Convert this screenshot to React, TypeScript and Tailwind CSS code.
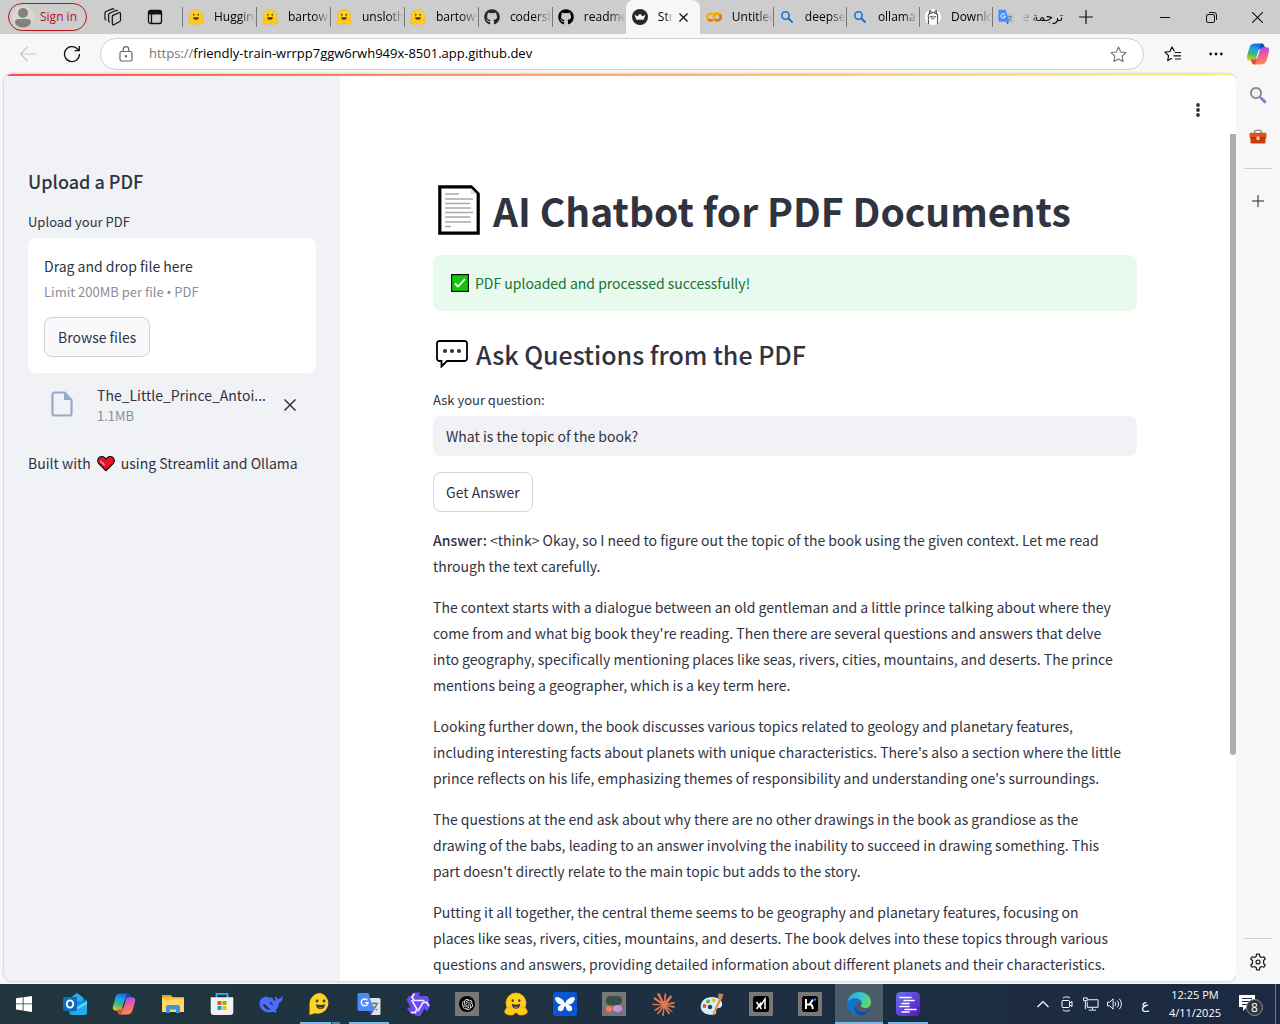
import React, { useId } from "react";
import { FaGithub } from "react-icons/fa";
import { SiOllama, SiOpenai, SiClaude } from "react-icons/si";

function HuggingFace({ className }: { className: string }) {
  return (
    <svg viewBox="0 0 24 24" className={className} aria-hidden="true">
      <circle cx="12" cy="11" r="10" fill="#ffd21e" stroke="#ffac03" strokeWidth="0.8" />
      <ellipse cx="8.7" cy="8.7" rx="1.2" ry="1.4" fill="#3a3b45" />
      <ellipse cx="15.3" cy="8.7" rx="1.2" ry="1.4" fill="#3a3b45" />
      <path d="M7.8 11.8c1.2 1 7.2 1 8.4 0 .3 2.8-1.6 5-4.2 5s-4.5-2.2-4.2-5z" fill="#3a3b45" />
      <path d="M10 15.500c.8-1.200 3.200-1.200 4 0-1 .9-3 .9-4 0z" fill="#ef4e4e" />
      <path d="M2 17c.5-2 2-1.500 2.400-.8.4-2.800 2.100-2.300 2.500-.5.8-.8 2 .2 2.200 1.600 1.700 1.700 2 3.500.6 5.200-2.400 1-6.500.6-8.400-1.200C.4 20 .6 18.200 2 17z" fill="#ffcc16" stroke="#ffac03" strokeWidth="0.8" />
      <path d="M22 17c-.5-2-2-1.500-2.400-.8-.4-2.800-2.100-2.300-2.500-.5-.8-.8-2 .2-2.200 1.600-1.700 1.700-2 3.500-.6 5.200 2.400 1 6.500.6 8.400-1.200.9-1.300.7-3.100-.7-4.300z" fill="#ffcc16" stroke="#ffac03" strokeWidth="0.8" />
    </svg>
  );
}

function Copilot({ className }: { className: string }) {
  const id = useId();
  const ribbon =
    "M9.200 1.500h6.300c1.600 0 2.400 1 2.800 2.500l.7 2.600h-3.600c-1.700 0-2.600.9-3.100 2.500l-2.200 7.200c-.5 1.700-1.500 2.500-3.200 2.500H3.800c-2.400 0-3.500-1.900-2.900-4.200l2.500-8.900c.8-2.800 2.600-4.200 5.800-4.200z";
  return (
    <svg viewBox="0 0 24 24" className={className} aria-hidden="true">
      <defs>
        <linearGradient id={id + "a"} x1="0.600" y1="0" x2="0.300" y2="1">
          <stop offset="0" stopColor="#1468d8" />
          <stop offset="0.350" stopColor="#18a5e8" />
          <stop offset="0.650" stopColor="#3fb878" />
          <stop offset="1" stopColor="#e8cc18" />
        </linearGradient>
        <linearGradient id={id + "b"} x1="0.500" y1="1" x2="0.300" y2="0">
          <stop offset="0" stopColor="#a44df0" />
          <stop offset="0.450" stopColor="#ee5c9c" />
          <stop offset="1" stopColor="#fb9148" />
        </linearGradient>
      </defs>
      <path d={ribbon} fill={`url(#${id}a)`} />
      <path d="M14.800 1.500h.7c1.600 0 2.400 1 2.800 2.500l.7 2.600h-3.600c-1 0-1.800.4-2.300 1z" fill="#1449b0" />
      <g transform="rotate(180 12 12)">
        <path d={ribbon} fill={`url(#${id}b)`} />
        <path d="M14.800 1.500h.7c1.600 0 2.400 1 2.800 2.500l.7 2.600h-3.600c-1 0-1.800.4-2.300 1z" fill="#e34a3b" />
      </g>
    </svg>
  );
}

function Translate({ className, faded }: { className: string; faded?: boolean }) {
  return (
    <svg viewBox="0 0 24 24" className={className} aria-hidden="true">
      <path d="M9 6h13a1.500 1.500 0 0 1 1.500 1.500v14A1.500 1.500 0 0 1 22 23h-8z" fill={faded ? "#bcc8cc" : "#dfe3e8"} />
      <path d="M14 11.500h7M17.500 10v1.500M20 11.500c-.7 3-2.500 5-5 6.500M15.500 13.500c1 2.200 2.500 3.600 4.800 4.700" stroke="#5f7d88" strokeWidth="1.300" fill="none" />
      <path d="M14 23l-2-4 4.500 0z" fill="#3457c8" />
      <path d="M2 1h9.500l5.500 18H2A1.500 1.500 0 0 1 .5 17.500v-15A1.500 1.500 0 0 1 2 1z" fill="#4c8bf5" />
      <path d="M10.300 8.200a3.400 3.400 0 1 0 .8 2.500H7.900" stroke="#fff" strokeWidth="1.400" fill="none" />
    </svg>
  );
}

function Colab() {
  return (
    <svg viewBox="0 0 16 16" className="size-4 shrink-0" fill="none" strokeWidth="2.400" aria-hidden="true">
      <circle cx="11.300" cy="8" r="3.400" stroke="#f9ab00" />
      <path d="M8.900 10.400a3.400 3.400 0 1 0 0-4.800" stroke="#e8710a" />
      <path d="M7 5.500a3.400 3.400 0 1 0 0 5" stroke="#f9ab00" />
      <path d="M2.200 10.400a3.400 3.400 0 0 0 4.800.1" stroke="#e8710a" />
      <path d="M8.900 10.400a3.400 3.400 0 0 1 4.800-4.800" stroke="#f9ab00" />
    </svg>
  );
}

function StreamlitCrown() {
  return (
    <svg viewBox="0 0 16 16" className="size-4 shrink-0" aria-hidden="true">
      <circle cx="8" cy="8" r="8" fill="#262730" />
      <path d="M2.500 5.500l3 2L8 4.500l2.500 3 3-2-1.800 5H4.300z" fill="#fff" />
      <path d="M4.300 9.500h7.400v1H4.300z" fill="#d9dade" />
    </svg>
  );
}

function BlueSearch() {
  return (
    <svg viewBox="0 0 16 16" className="size-4 shrink-0" fill="none" stroke="#1a75cf" strokeLinecap="round" aria-hidden="true">
      <circle cx="6.500" cy="6.500" r="3.700" strokeWidth="1.600" />
      <path d="M9.500 9.500l3.500 3.500" strokeWidth="2" />
    </svg>
  );
}

type Tab = { title: string; icon: React.ReactNode; active?: boolean; rtl?: boolean };

const tabs: Tab[] = [
  { title: "Hugging", icon: <HuggingFace className="size-4 shrink-0" /> },
  { title: "bartowski", icon: <HuggingFace className="size-4 shrink-0" /> },
  { title: "unsloth/", icon: <HuggingFace className="size-4 shrink-0" /> },
  { title: "bartowski", icon: <HuggingFace className="size-4 shrink-0" /> },
  { title: "codersb", icon: <FaGithub className="size-4 shrink-0 text-[#24292e]" /> },
  { title: "readme", icon: <FaGithub className="size-4 shrink-0 text-black" /> },
  { title: "Streamlit", icon: <StreamlitCrown />, active: true },
  { title: "Untitled", icon: <Colab /> },
  { title: "deepseek", icon: <BlueSearch /> },
  { title: "ollama", icon: <BlueSearch /> },
  {
    title: "Download",
    icon: (
      <span className="flex size-4 shrink-0 items-center justify-center rounded-full bg-white">
        <SiOllama className="size-[14px] text-[#222]" />
      </span>
    ),
  },
  { title: "ترجمة Google", icon: <Translate className="size-4 shrink-0" faded />, rtl: true },
];

function tabClass(i: number, active?: boolean) {
  if (active) return "flex min-w-0 flex-[74] items-center rounded-t-lg bg-[#f7f7f7] pl-1.5";
  if (i === 7) return "flex min-w-0 flex-[73] items-center pl-1.5";
  return i < 6
    ? "flex min-w-0 flex-[74] items-center pl-1.5 [background:linear-gradient(#777,#777)_left_center/1px_20px_no-repeat]"
    : "flex min-w-0 flex-[73] items-center pl-1.5 [background:linear-gradient(#777,#777)_left_center/1px_20px_no-repeat]";
}

function TabStrip() {
  return (
    <header className="flex h-[34px] shrink-0 items-stretch bg-[#cdcdcd] text-xs text-black">
      <div className="flex w-[182px] shrink-0 items-center pl-2">
        <button className="flex h-7 w-[79px] items-center gap-1.5 rounded-full border border-[#b5161d] pl-[3px] text-[#b5161d]">
          <svg viewBox="0 0 22 22" className="size-[22px] shrink-0" aria-hidden="true">
            <circle cx="11" cy="11" r="11" fill="#dad8d4" />
            <circle cx="11" cy="7" r="5" fill="#85827e" />
            <path d="M3 16c0-2 1.200-3 3-3h10c1.800 0 3 1 3 3 0 3-4 5.500-8 5.500S3 19 3 16z" fill="#85827e" />
          </svg>
          <span className="whitespace-nowrap">Sign in</span>
        </button>
        <button aria-label="Workspaces" className="ml-[17px]">
          <svg viewBox="0 0 18 18" className="size-[18px]" fill="none" stroke="#111" strokeWidth="1.200" strokeLinejoin="round" strokeLinecap="round">
            <path d="M8.300 8.600c0-.7.4-1.200 1-1.500l5.700-2.300c.8-.3 1.500.1 1.500 1v6.400c0 .6-.3 1-.8 1.300l-5.900 3.200c-.8.4-1.500 0-1.500-.9z" />
            <path d="M5.500 14c-.6-.2-.9-.6-.9-1.200V6.800c0-.8.4-1.300 1-1.600l6.200-2.700c.6-.3 1.200-.1 1.500.4" />
            <path d="M1.900 12c-.6-.2-.9-.6-.9-1.200V5.100c0-.8.4-1.300 1-1.600L8.200.9c.6-.3 1.200-.1 1.500.4" />
          </svg>
        </button>
        <button aria-label="Tab actions" className="ml-[25px]">
          <svg viewBox="0 0 16 16" className="size-4" fill="none" stroke="#111" strokeWidth="1.300">
            <rect x="1.500" y="1.500" width="13" height="13" rx="2" />
            <path d="M1.500 3.500h13" strokeWidth="4" />
            <path d="M4.500 5v9.500" />
          </svg>
        </button>
      </div>
      <nav className="flex min-w-0 max-w-[883px] flex-1">
        {tabs.map((tab, i) => (
          <div key={i} className={tabClass(i, tab.active)}>
            {tab.icon}
            {tab.rtl ? (
              <span dir="rtl" className="ml-2 mr-0.5 flex-1 overflow-hidden whitespace-nowrap [mask-image:linear-gradient(to_left,black_55%,transparent)]">
                {tab.title}
              </span>
            ) : tab.active ? (
              <>
                <span className="ml-2.5 w-[15px] overflow-hidden whitespace-nowrap [mask-image:linear-gradient(to_right,black_50%,transparent)]">
                  {tab.title}
                </span>
                <button aria-label="Close tab" className="ml-1.5">
                  <svg viewBox="0 0 10 10" className="size-[9px]" stroke="#111" strokeWidth="1.400">
                    <path d="M.5.5l9 9M9.500.5l-9 9" />
                  </svg>
                </button>
              </>
            ) : (
              <span className="ml-2.5 flex-1 overflow-hidden whitespace-nowrap [mask-image:linear-gradient(to_right,black_60%,transparent)]">
                {tab.title}
              </span>
            )}
          </div>
        ))}
      </nav>
      <button aria-label="New tab" className="w-[42px] shrink-0 pl-3.5">
        <svg viewBox="0 0 14 14" className="size-[14px]" stroke="#111" strokeWidth="1.200">
          <path d="M7 0v14M0 7h14" />
        </svg>
      </button>
      <div className="ml-auto flex shrink-0">
        <button aria-label="Minimize" className="flex w-[46px] items-center justify-center">
          <svg viewBox="0 0 10 10" className="size-[10px]" stroke="#111"><path d="M0 5.500h10" /></svg>
        </button>
        <button aria-label="Restore" className="flex w-[46px] items-center justify-center">
          <svg viewBox="0 0 11 11" className="size-[11px]" stroke="#111" fill="none">
            <rect x="0.500" y="2.500" width="8" height="8" rx="1.500" />
            <path d="M3 .5h5A2.500 2.500 0 0 1 10.500 3v5" />
          </svg>
        </button>
        <button aria-label="Close" className="flex w-[46px] items-center justify-center">
          <svg viewBox="0 0 10 10" className="size-[11px]" stroke="#111"><path d="M0 0l10 10M10 0L0 10" /></svg>
        </button>
      </div>
    </header>
  );
}

const starPath = "M8 1l2.100 4.600 4.900.6-3.600 3.400.9 5L8 12.200 3.700 14.600l.9-5L1 6.200l4.900-.6z";

function AddressBar() {
  return (
    <div className="flex h-10 shrink-0 items-center bg-[#f7f7f7]">
      <button aria-label="Back" className="ml-[19px]">
        <svg viewBox="0 0 18 16" className="h-4 w-[18px]" fill="none" stroke="#c6c6c6" strokeWidth="1.200">
          <path d="M17 8H1.500M8.500 1L1.500 8l7 7" />
        </svg>
      </button>
      <button aria-label="Refresh" className="ml-[26px]">
        <svg viewBox="0 0 18 18" className="size-[18px]" fill="none" stroke="#111" strokeWidth="1.300">
          <path d="M16.500 9A7.500 7.500 0 1 1 14 3.500l2 2M16.300 1v4.700h-4.700" />
        </svg>
      </button>
      <div className="ml-[19px] flex h-8 min-w-0 flex-1 items-center rounded-full border border-[#cfcfcf] bg-white pl-[18px] pr-4">
        <svg viewBox="0 0 14 16" className="h-4 w-[14px] shrink-0" fill="none" stroke="#666" strokeWidth="1.200" aria-hidden="true">
          <rect x="1" y="5.500" width="12" height="9.500" rx="1.800" />
          <path d="M4.200 5.500V3.500a2.800 2.800 0 0 1 5.600 0v2" />
          <circle cx="7" cy="10.300" r="0.600" fill="#666" />
        </svg>
        <label htmlFor="address" className="ml-4 text-[13px] text-[#767676]">https://</label>
        <input
          id="address"
          defaultValue="friendly-train-wrrpp7ggw6rwh949x-8501.app.github.dev"
          className="min-w-0 flex-1 bg-transparent text-[13px] text-black outline-none"
        />
        <button aria-label="Add to favorites">
          <svg viewBox="0 0 16 16" className="size-[17px]" fill="none" stroke="#707070" strokeLinejoin="round">
            <path d={starPath} />
          </svg>
        </button>
      </div>
      <div className="ml-5 flex shrink-0 items-center">
        <button aria-label="Favorites">
          <svg viewBox="0 0 18 16" className="h-4 w-[18px]" fill="none" stroke="#111" strokeWidth="1.200" strokeLinejoin="round">
            <path d="M10.500 5.500L8 1 5.900 5.500 1 6.200l3.600 3.400-.9 5L8 12.200M11 6.500h6M9.500 9.800h7.500M11 13h6" />
          </svg>
        </button>
        <button aria-label="Settings and more" className="ml-[27px]">
          <svg viewBox="0 0 14 4" className="h-1 w-[14px]" fill="#111">
            <circle cx="1.700" cy="2" r="1.400" /><circle cx="7" cy="2" r="1.400" /><circle cx="12.300" cy="2" r="1.400" />
          </svg>
        </button>
        <button aria-label="Copilot" className="ml-[23px] mr-[10px]">
          <Copilot className="size-6" />
        </button>
      </div>
    </div>
  );
}

function EdgeSidebar() {
  return (
    <aside className="flex w-11 shrink-0 flex-col items-center bg-[#f7f7f7]">
      <button aria-label="Search" className="mt-3">
        <svg viewBox="0 0 18 18" className="size-[18px]" fill="none">
          <circle cx="7" cy="7" r="5.200" stroke="#858585" strokeWidth="1.800" fill="#eeeff1" />
          <path d="M10.800 10.800l2 2" stroke="#858585" strokeWidth="1.800" />
          <path d="M12.800 12.800l3 3" stroke="#a069d6" strokeWidth="3" strokeLinecap="round" />
        </svg>
      </button>
      <button aria-label="Tools" className="mt-6">
        <svg viewBox="0 0 18 18" className="size-[18px]">
          <path d="M5.500 5V4c0-1 .6-1.600 1.600-1.600h3.800c1 0 1.600.6 1.600 1.600v1" stroke="#858b91" strokeWidth="1.400" fill="none" />
          <path d="M1.500 9h15v5.500a1 1 0 0 1-1 1h-13a1 1 0 0 1-1-1z" fill="#c93d0c" />
          <rect x="0.500" y="4.800" width="17" height="5" rx="1" fill="#e4501b" />
          <path d="M1 9.800h16" stroke="#9d2c07" />
          <rect x="7.500" y="8.500" width="3" height="3.400" rx="0.600" fill="#c9d3d8" />
        </svg>
      </button>
      <hr className="mt-[22px] w-7 border-[#cfcfcf]" />
      <button aria-label="Customize" className="mt-[26px]">
        <svg viewBox="0 0 12 12" className="size-3" stroke="#222"><path d="M6 0v12M0 6h12" /></svg>
      </button>
      <hr className="mt-auto w-7 border-[#cfcfcf]" />
      <button aria-label="Settings" className="mb-[13px] mt-3.5">
        <svg viewBox="0 0 24 24" className="size-[18px]" fill="none" stroke="#222" strokeWidth="1.700" strokeLinejoin="round">
          <path d="M9.600 4.500L10.200 1.500h3.600l.6 3 2.600 1.500 2.900-1 1.800 3.100L19.400 10.100v3.800l2.300 2-1.800 3.100-2.900-1-2.600 1.500-.6 3h-3.600l-.6-3L7 18l-2.900 1-1.800-3.100 2.300-2v-3.800l-2.300-2L4.100 5 7 6z" />
          <circle cx="12" cy="12" r="2.600" />
        </svg>
      </button>
    </aside>
  );
}

function UploadSidebar() {
  return (
    <aside className="w-[336px] shrink-0 bg-[#f0f2f6] px-6 pt-[93px]">
      <h2 className="text-[18px] font-medium leading-6">Upload a PDF</h2>
      <label htmlFor="browse" className="mt-[17px] block text-[13px] leading-6">Upload your PDF</label>
      <section className="mt-1 rounded-lg bg-white px-4 pb-4 pt-[15px]">
        <p className="text-sm leading-[26px]">Drag and drop file here</p>
        <p className="mb-[15px] mt-[3px] text-[13px] leading-5 text-[#8b8d96]">
          Limit 200MB per file <span className="font-['Noto_Sans',sans-serif]">•</span> PDF
        </p>
        <button id="browse" className="h-10 rounded-lg border border-[#d0d1d6] bg-[#f9f9fb] px-[13px] text-sm">
          Browse files
        </button>
      </section>
      <div className="flex items-center pl-[23px] pt-[11px]">
        <svg viewBox="0 0 22 26" className="mb-[2px] h-[26px] w-[22px] shrink-0" fill="none" aria-hidden="true">
          <path d="M13.500 1.500H3.500a2 2 0 0 0-2 2v19a2 2 0 0 0 2 2h15a2 2 0 0 0 2-2V9z" stroke="#99a7cd" strokeWidth="2.200" strokeLinejoin="round" />
          <path d="M13 1.500V9h7.500z" fill="#99a7cd" />
        </svg>
        <div className="ml-6 w-[177px] min-w-0">
          <p className="whitespace-nowrap text-sm leading-[22px]">The_Little_Prince_Antoi...</p>
          <p className="text-[13px] leading-5 text-[#8b8d96]">1.1MB</p>
        </div>
        <button aria-label="Remove file" className="ml-[10px]">
          <svg viewBox="0 0 12 12" className="size-3" stroke="#31333f" strokeWidth="1.500"><path d="M.5.5l11 11M11.500.5l-11 11" /></svg>
        </button>
      </div>
      <p className="mt-6 flex items-center text-sm leading-[26px]">
        Built with
        <svg viewBox="0 0 18 17" role="img" aria-label="love" className="mx-1.5 h-[17px] w-[18px]">
          <path d="M9 15.700L1.800 8.600C.3 7 .4 4.200 1.900 2.700c1.600-1.600 4.200-1.600 5.700 0L9 4.100l1.400-1.400c1.500-1.600 4.100-1.600 5.700 0 1.500 1.500 1.600 4.300.1 5.900z" fill="#e81224" stroke="#111" strokeWidth="1.200" />
          <path d="M3.600 6.200l3.600 3.600" stroke="#f6a0a6" strokeLinecap="round" strokeWidth="1.400" />
        </svg>
        using Streamlit and Ollama
      </p>
    </aside>
  );
}

const paragraphs = [
  "The context starts with a dialogue between an old gentleman and a little prince talking about where they come from and what big book they're reading. Then there are several questions and answers that delve into geography, specifically mentioning places like seas, rivers, cities, mountains, and deserts. The prince mentions being a geographer, which is a key term here.",
  "Looking further down, the book discusses various topics related to geology and planetary features, including interesting facts about planets with unique characteristics. There's also a section where the little prince reflects on his life, emphasizing themes of responsibility and understanding one's surroundings.",
  "The questions at the end ask about why there are no other drawings in the book as grandiose as the drawing of the babs, leading to an answer involving the inability to succeed in drawing something. This part doesn't directly relate to the main topic but adds to the story.",
  "Putting it all together, the central theme seems to be geography and planetary features, focusing on places like seas, rivers, cities, mountains, and deserts. The book delves into these topics through various questions and answers, providing detailed information about different planets and their characteristics.",
];

function ChatPage() {
  return (
    <main className="flex min-w-0 flex-1 flex-col bg-white">
      <div className="flex h-[58px] shrink-0 items-center justify-end pr-9 pt-2.5">
        <button aria-label="Main menu">
          <svg viewBox="0 0 4 14" className="h-[14px] w-1" fill="#31333f">
            <circle cx="2" cy="2" r="1.900" /><circle cx="2" cy="7" r="1.900" /><circle cx="2" cy="12" r="1.900" />
          </svg>
        </button>
      </div>
      <div className="flex min-h-0 flex-1">
        <div className="min-w-0 flex-1 overflow-hidden px-4">
          <div className="mx-auto max-w-[704px] pt-[50px]">
            <h1 className="flex items-center whitespace-nowrap text-[39px] font-bold leading-[52px]">
              <svg viewBox="0 0 42 50" className="ml-[5px] mr-[13px] h-[50px] w-[42px] shrink-0" aria-hidden="true">
                <path d="M1.800 1.800h31.400l7 7v39.400H1.800z" fill="#fff" stroke="#000" strokeWidth="3.200" />
                <path d="M33 3v6h6z" fill="#ddd" />
                <path d="M7 9h14M7 14h28M7 18.500h25M7 23h26M7 27.500h28M7 32h25M7 37h26M7 41.500h6" stroke="#aaa" strokeWidth="1.300" />
              </svg>
              AI Chatbot for PDF Documents
            </h1>
            <div role="status" className="mt-[19px] flex h-14 items-center rounded-lg bg-[#e8f9ee] px-[18px] text-sm text-[#177233]">
              <svg viewBox="0 0 18 18" className="mr-1.5 size-[18px]" aria-hidden="true">
                <rect x="0.600" y="0.600" width="16.800" height="16.800" fill="#16c60c" stroke="#111" strokeWidth="1.200" />
                <path d="M4 9.500l3 3L14 5" stroke="#fff" strokeWidth="1.800" fill="none" />
              </svg>
              PDF uploaded and processed successfully!
            </div>
            <h2 className="mt-[25px] flex items-center text-[25px] font-medium leading-9">
              <svg viewBox="0 0 32 28" className="ml-[3px] mr-2 h-7 w-8" aria-hidden="true">
                <path d="M3.500 1h25A2.500 2.500 0 0 1 31 3.500v15a2.500 2.500 0 0 1-2.500 2.500H11l-5.500 5.500V21h-2A2.500 2.500 0 0 1 1 18.500v-15A2.500 2.500 0 0 1 3.500 1z" fill="#fff" stroke="#000" strokeWidth="1.800" />
                <g fill="#333"><circle cx="9" cy="11" r="2" /><circle cx="16" cy="11" r="2" /><circle cx="23" cy="11" r="2" /></g>
              </svg>
              Ask Questions from the PDF
            </h2>
            <label htmlFor="question" className="mt-4 block text-[13px] leading-6">Ask your question:</label>
            <input
              id="question"
              defaultValue="What is the topic of the book?"
              className="mt-1 block h-10 w-full rounded-lg bg-[#f0f2f6] px-[13px] text-sm outline-none"
            />
            <button className="mt-4 block h-10 rounded-lg border border-[#d6d6d9] bg-white px-3 text-sm">Get Answer</button>
            <div className="mt-[15px] flex flex-col gap-[15px] pr-[15px] text-sm leading-[26px]">
              <p>
                <strong className="font-medium">Answer:</strong>
                {" <think> Okay, so I need to figure out the topic of the book using the given context. Let me read through the text carefully."}
              </p>
              {paragraphs.map((text) => (
                <p key={text}>{text}</p>
              ))}
            </div>
          </div>
        </div>
        <div className="w-1.5 shrink-0">
          <div className="h-11/15 w-full rounded-b-sm bg-[#acadb2]" />
        </div>
      </div>
    </main>
  );
}

const box = "size-6";

const taskIcons: { name: string; icon: React.ReactNode; mark?: "run" | "active" | "group" | "start" }[] = [
  {
    name: "Start",
    mark: "start",
    icon: (
      <svg viewBox="0 0 16 16" className="size-4" fill="#fff">
        <path d="M0 2.200l6.700-.9v6.200H0zM7.500 1.200L16 0v7.500H7.500zM0 8.300h6.700v6.200L0 13.600zM7.500 8.300H16V16l-8.500-1.200z" />
      </svg>
    ),
  },
  {
    name: "Outlook",
    icon: (
      <svg viewBox="0 0 24 24" className={box}>
        <path d="M4 8l10-7 9.500 7v4H4z" fill="#1066b8" />
        <path d="M8 5.500L14 1l6 4.500v8H8z" fill="#32a9e7" />
        <path d="M6 10l18-1.500V20a3 3 0 0 1-3 3H9a3 3 0 0 1-3-3z" fill="#1490df" />
        <path d="M24 9v11.500L12 16z" fill="#50d9ff" />
        <path d="M6.500 22L24 12v8a3 3 0 0 1-3 3H9z" fill="#28a8ea" />
        <rect x="0" y="5" width="14" height="14" rx="1.200" fill="#0f6cbd" />
        <ellipse cx="7" cy="12" rx="3.200" ry="3.600" fill="none" stroke="#fff" strokeWidth="1.900" />
      </svg>
    ),
  },
  { name: "Copilot", icon: <Copilot className={box} /> },
  {
    name: "File Explorer",
    icon: (
      <svg viewBox="0 0 24 24" className={box}>
        <path d="M1 3h9l2 3H1z" fill="#e8a317" />
        <path d="M1 5.500h22V20H1z" fill="#ffd868" />
        <path d="M1 5.500h22v2H1z" fill="#f7c64a" />
        <path d="M5 21v-6a2 2 0 0 1 2-2h10a2 2 0 0 1 2 2v6h-4v-3.500H9V21z" fill="#3c94da" />
      </svg>
    ),
  },
  {
    name: "Microsoft Store",
    icon: (
      <svg viewBox="0 0 24 24" className={box}>
        <path d="M6.500 6V1.800h11V6" stroke="#28b4e8" strokeWidth="1.800" fill="none" />
        <path d="M.7 5.200h22.600V20a3 3 0 0 1-3 3H3.700a3 3 0 0 1-3-3z" fill="#f1f1f1" />
        <path d="M7.500 9h4v4h-4z" fill="#f25022" /><path d="M12.500 9h4v4h-4z" fill="#7fba00" />
        <path d="M7.500 14h4v4h-4z" fill="#00a4ef" /><path d="M12.500 14h4v4h-4z" fill="#ffb900" />
      </svg>
    ),
  },
  {
    name: "DeepSeek",
    icon: (
      <svg viewBox="0 0 24 24" className={box} fill="#4d6bfe">
        <path d="M.5 11C1 6.500 4.500 4.300 8 4.800c1.500.2 2.500.7 3.500 1.500C12 5.500 12.600 5 13 4.700c.7 2.200 1.800 3.800 3.600 4.600.1-2.300-.6-3.600-1.100-5 1.800.5 2.700 1.500 3.200 2.700C20.500 7.200 22 6 23.500 3.500c.5 4-.8 6.700-3.600 7.600-.2 3.300-1.500 5.800-3.300 7.400l1.500 1.600c-1.500.7-3 .3-4.200-.3C7.500 22 0 18 .5 11z" />
        <path d="M4 12c2.500-1 5 4.500 8.500 5.500C8.500 18.500 4.500 16 4 12z" fill="#20343f" />
        <path d="M10.500 10c2-.2 3.500 1.200 3.500 3.200-1.600-.3-3-1.400-3.500-3.200z" fill="#20343f" />
      </svg>
    ),
  },
  {
    name: "HuggingChat",
    mark: "group",
    icon: (
      <svg viewBox="0 0 24 24" className={box}>
        <path d="M12.500 1A10.500 10.500 0 1 1 7 21.300L1.500 23V12A11 11 0 0 1 12.500 1z" fill="#ffd21e" />
        <circle cx="9" cy="9" r="1.400" fill="#3a3b45" /><circle cx="16" cy="9" r="1.400" fill="#3a3b45" />
        <path d="M8 12c2 1.200 7 1.200 9 0 .2 3-2 5-4.500 5S7.800 15 8 12z" fill="#3a3b45" />
        <path d="M10.500 15.800c1-1 3-1 4 0-1.200.9-2.800.9-4 0z" fill="#ef4e4e" />
      </svg>
    ),
  },
  { name: "Google Translate", mark: "run", icon: <Translate className={box} /> },
  {
    name: "Qwen",
    icon: (
      <svg viewBox="0 0 24 24" className={box}>
        {[0, 120, 240].map((angle) => (
          <g key={angle} transform={`rotate(${angle} 12 12)`}>
            <path d="M6 2l3-1.500h5L13 4h8.500l2 4.500-2.500 3-3-2.500H8L4 6z" fill="#6b4cf2" />
          </g>
        ))}
        <path d="M6 7h12l1 5-4 7-6 0-4-7z" fill="#6b4cf2" />
        {[0, 120, 240].map((angle) => (
          <g key={angle} transform={`rotate(${angle} 12 12)`}>
            <path d="M8.300 1.500L6 5.300l2.200 3.200h10.300" stroke="#efeaff" strokeWidth="1.700" fill="none" />
          </g>
        ))}
      </svg>
    ),
  },
  {
    name: "ChatGPT",
    icon: (
      <span className="flex size-6 items-center justify-center bg-[#777]">
        <span className="flex size-4 items-center justify-center rounded-full bg-black"><SiOpenai className="size-[11px] text-white" /></span>
      </span>
    ),
  },
  { name: "Hugging Face", icon: <HuggingFace className={box} /> },
  {
    name: "Butterfly",
    icon: (
      <svg viewBox="0 0 24 24" className={box}>
        <rect width="24" height="24" rx="3" fill="#0b55d4" />
        <path d="M12 11.500C10.500 7.500 7.500 5.500 4.500 5 2.500 4.800 1.800 6 2.200 7.500 3 10.500 6 12.500 9 12.800c-2.500.4-4.500 2.200-4.200 4.400.4 2.600 4.600 2.800 5.800-.2.600-1.500.8-2.700 1.400-3.500.6.800.8 2 1.400 3.500 1.200 3 5.400 2.800 5.800.2.300-2.200-1.700-4-4.200-4.400 3-.3 6-2.300 6.800-5.300.4-1.500-.3-2.700-2.300-2.500-3 .5-6 2.500-7.500 6.500z" fill="#fff" />
      </svg>
    ),
  },
  {
    name: "Cohere",
    icon: (
      <svg viewBox="0 0 24 24" className={box}>
        <path d="M0 0h24v24H0z" fill="#777" />
        <path d="M8.500 4H16a4.500 4.500 0 0 1 1.500 8.500c-3 1.200-5 .8-9 .8A4.600 4.600 0 0 1 8.500 4z" fill="#355146" />
        <circle cx="7" cy="17" r="3" fill="#ff7759" />
        <ellipse cx="15.500" cy="16.500" rx="4.700" ry="3.600" fill="#d18ee2" />
      </svg>
    ),
  },
  { name: "Claude", icon: <SiClaude className="size-[23px] text-[#d97757]" /> },
  {
    name: "Paint",
    icon: (
      <svg viewBox="0 0 24 24" className={box}>
        <path d="M12 5c7 0 11 4 10 8.500-.6 2.800-3.500 2-5 3.200-1.800 1.500.5 4-2 5.500C10 24 1 22 .7 15 .5 9 5.500 5 12 5z" fill="#d5ecf8" />
        <circle cx="4.500" cy="14" r="2" fill="#e84b3c" /><circle cx="8" cy="9.500" r="2" fill="#55b948" />
        <circle cx="13.500" cy="8.300" r="2" fill="#f6b91c" /><circle cx="10" cy="15" r="2.200" fill="#26414e" />
        <path d="M20 5l2 1.500-8 16-2 1z" fill="#f08a24" />
        <path d="M18.500 1.500l5 .5L22 7l-4-1z" fill="#b58a5f" />
      </svg>
    ),
  },
  {
    name: "xAI",
    icon: (
      <svg viewBox="0 0 24 24" className={box}>
        <path d="M0 0h24v24H0z" fill="#777" />
        <rect x="4" y="4" width="16" height="16" rx="2.500" fill="#000" />
        <path d="M7.500 10l5 7M12.200 10.500L7.500 17M11 14.500L16 7v10" stroke="#fff" strokeWidth="1.500" fill="none" />
      </svg>
    ),
  },
  {
    name: "Kimi",
    icon: (
      <svg viewBox="0 0 24 24" className={box}>
        <path d="M0 0h24v24H0z" fill="#777" />
        <rect x="4" y="4" width="16" height="16" rx="2.500" fill="#000" />
        <path d="M8 7v10M8.500 12.500h3L15 7.500M12 12.500c2 0 2.700 1 2.700 4.500" stroke="#fff" strokeWidth="2" fill="none" />
        <circle cx="17" cy="7.500" r="1.200" fill="#1783ff" />
      </svg>
    ),
  },
  {
    name: "Microsoft Edge",
    mark: "active",
    icon: (
      <svg viewBox="0 0 24 24" className={box}>
        <defs>
          <linearGradient id="edge-top" x1="0" y1="0.300" x2="1" y2="0.600">
            <stop offset="0" stopColor="#2ba7dd" /><stop offset="0.500" stopColor="#35c5d3" /><stop offset="1" stopColor="#66db58" />
          </linearGradient>
        </defs>
        <path d="M.2 11C.8 4.500 6 0 12.300 0 19 0 24 4.800 24 10.200c0 3.700-2.500 5.800-6 5.800-2.500 0-4.300-.9-4.300-1.900 0-.6.9-1 .9-2.700C14.600 8.800 12 6.500 8.500 6.500 4 6.500 1 8.800.2 11z" fill="url(#edge-top)" />
        <path d="M.1 12C.1 9 3.500 6.500 8 6.500c3.800 0 6.500 2.200 6.600 4.800-1.400-1-3.700-1-5.200.6-3 3.300-.8 8.600 4.300 10.600.8.300 1.500.5 2.300.6C8 26 .1 20 .1 12z" fill="#1273cc" />
        <path d="M9 12.300c-2.300 3.800.8 7.500 5.700 7.700 3 .1 5.300-.9 7-2.300.5-.4 1 .1.700.6C20.300 21.500 17 23.500 14 23.700 8.500 22.500 5.500 16.500 9 12.300z" fill="#0d4f9f" />
      </svg>
    ),
  },
  {
    name: "Notes",
    mark: "run",
    icon: (
      <svg viewBox="0 0 24 24" className={box}>
        <defs>
          <linearGradient id="notes" x1="0" y1="0" x2="1" y2="1">
            <stop offset="0" stopColor="#6b74ec" /><stop offset="1" stopColor="#5414c4" />
          </linearGradient>
        </defs>
        <rect width="24" height="24" rx="4.500" fill="url(#notes)" />
        <path d="M4 5.500h11M8 8.500h10M6 11.500h7M4 14.500h9M9 17.500h11M6 20h7" stroke="#fff" strokeWidth="1.600" strokeLinecap="round" />
      </svg>
    ),
  },
];

const markClass = {
  none: "flex w-12 items-center justify-center",
  start: "mr-0.5 flex w-12 items-center justify-center",
  active: "flex w-12 items-center justify-center border-b-2 border-[#76b9ed] bg-[#4b5b68] pt-0.5",
  run: "flex w-12 items-center justify-center [background:linear-gradient(#76b9ed,#76b9ed)_center_bottom/40px_2px_no-repeat]",
  group:
    "flex w-12 items-center justify-center [background:linear-gradient(to_right,#76b9ed_31px,#21363e_31px,#21363e_32px,#4f86b4_32px)_center_bottom/40px_2px_no-repeat]",
};

function Taskbar() {
  return (
    <footer className="flex h-10 shrink-0 items-stretch bg-linear-to-r from-[#21363e] to-[#1b2942] text-white">
      <nav className="flex gap-px">
        {taskIcons.map(({ name, icon, mark }) => (
          <button key={name} aria-label={name} className={markClass[mark ?? "none"]}>
            {icon}
          </button>
        ))}
      </nav>
      <div className="ml-auto flex shrink-0 items-center">
        <div className="flex items-center gap-2">
          <button aria-label="Show hidden icons">
            <svg viewBox="0 0 16 16" className="size-4" fill="none" stroke="#fff" strokeWidth="1.200"><path d="M2.500 11L8 5.500l5.500 5.500" /></svg>
          </button>
          <svg viewBox="0 0 16 16" className="size-4" fill="none" stroke="#fff" aria-label="Meet now">
            <rect x="3" y="4.500" width="7.500" height="7" rx="1" /><path d="M10.500 7l2.500-1.500v5L10.500 9M4 2c2-1.500 5-1.500 7 0M4 14c2 1.500 5 1.500 7 0" />
          </svg>
          <svg viewBox="0 0 17 16" className="size-4" fill="none" stroke="#fff" aria-label="Network">
            <path d="M5 3.500h11v8H4.500V6M10 11.500V14M6 14.500h8M.5 1.500h4v3h-4zM2.500 4.500v9" />
          </svg>
          <svg viewBox="0 0 17 16" className="size-4" fill="none" stroke="#fff" aria-label="Volume">
            <path d="M.5 6H3l3.500-3.500v11L3 10H.5zM8.500 6c1 1 1 3 0 4M10.800 4.300c2 2 2 5.400 0 7.400M13 2.500c3 3 3 8 0 11" />
          </svg>
        </div>
        <span className="ml-[18px] text-[13px] leading-5">ع</span>
        <div className="ml-5 text-center text-[11px] leading-[18px]">
          <p>12:25 PM</p>
          <p>4/11/2025</p>
        </div>
        <button aria-label="8 notifications" className="relative ml-[18px] mr-3 size-6">
          <svg viewBox="0 0 24 24" className="size-6">
            <path d="M0 3h16v12H8l-4 4v-4H0z" fill="#fff" />
            <path d="M3 6.500h10M3 9.500h10M3 12.500h7" stroke="#1b2942" />
          </svg>
          <span className="absolute left-[7px] top-[7px] flex size-[17px] items-center justify-center rounded-full border border-[#8d949c] bg-[#2d343c] text-xs leading-none">8</span>
        </button>
        <span className="mr-1 h-full w-px bg-[#6c7885]" />
      </div>
    </footer>
  );
}

export default function App() {
  return (
    <div className="flex h-screen flex-col overflow-hidden bg-[#f7f7f7] font-['Open_Sans','DejaVu_Sans',sans-serif]">
      <TabStrip />
      <AddressBar />
      <div className="flex min-h-0 flex-1">
        <div className="mb-[3px] ml-1 flex min-w-0 flex-1 flex-col overflow-hidden rounded-lg font-['Noto_Sans_CJK_SC',sans-serif] text-[#31333f] shadow-[0_0_2px_1px_#d4d4d4]">
          <div className="h-0.5 shrink-0 bg-linear-to-r from-[#ff4b4b] to-[#fffd80]" />
          <div className="flex min-h-0 flex-1">
            <UploadSidebar />
            <ChatPage />
          </div>
        </div>
        <EdgeSidebar />
      </div>
      <Taskbar />
    </div>
  );
}
